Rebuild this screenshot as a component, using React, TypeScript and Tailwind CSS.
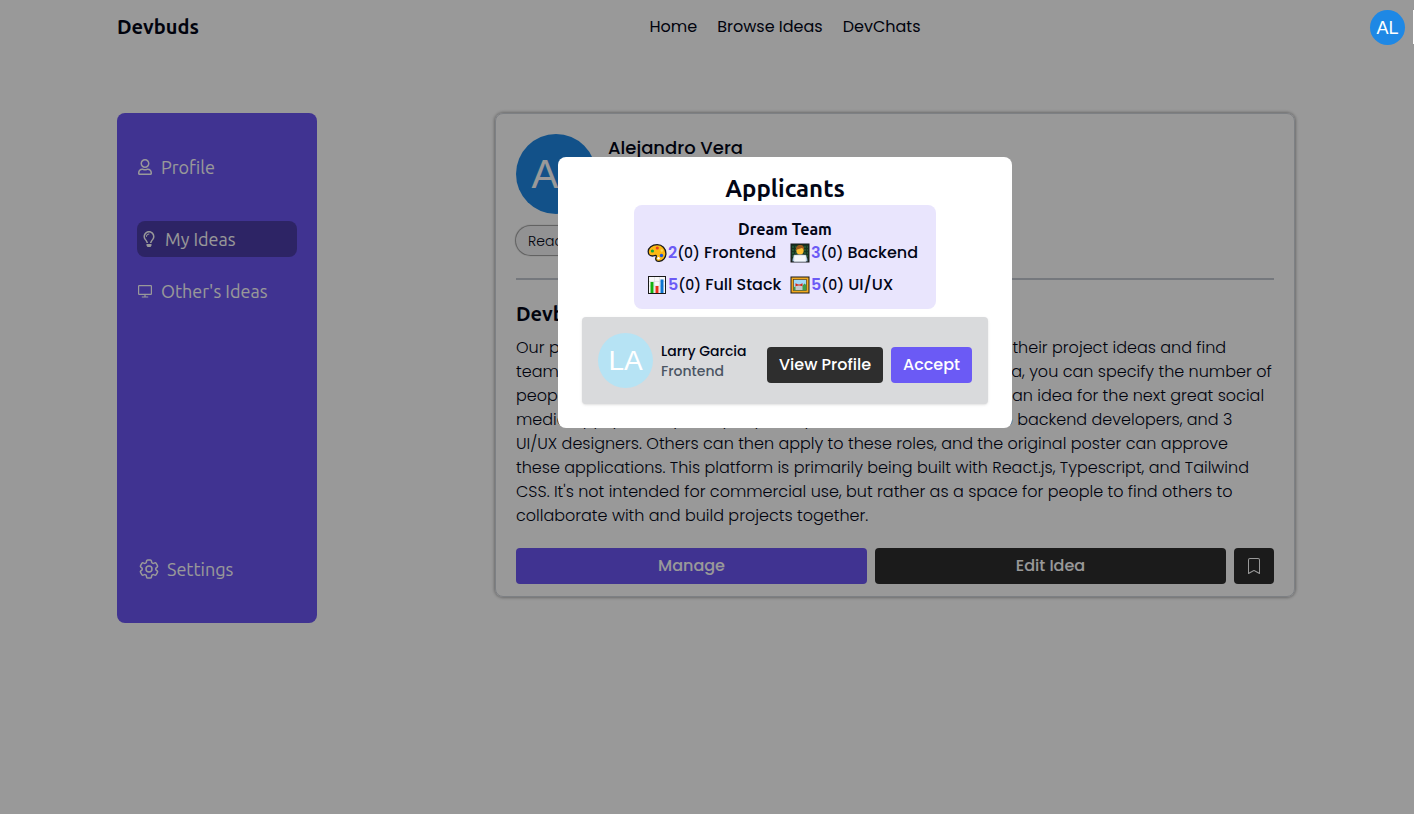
import { BsBookmark } from "react-icons/bs";
import { FaRegLightbulb, FaRegUser } from "react-icons/fa";
import { HiOutlineCog6Tooth } from "react-icons/hi2";
import type { ReactNode } from "react";

const HEAD = "font-['Ubuntu','Noto_Sans',sans-serif]";

function Monitor() {
  return (
    <svg viewBox="0 0 16 16" className="h-4 w-4 shrink-0" fill="none" stroke="currentColor" strokeWidth="1.2" aria-hidden="true">
      <rect x="1.600" y="2.600" width="12.800" height="8.800" rx=".6" />
      <path d="M8 11.400v2.400M4.800 14h6.400" />
    </svg>
  );
}

function Palette() {
  return (
    <svg viewBox="0 0 20 20" className="h-5 w-5 shrink-0" aria-hidden="true">
      <path d="M10.200 1.700C5 1.700 1.200 4.800 1.200 8.400c0 2.700 1.900 4.600 4.300 4.600 1.600 0 2.800-1 3.600-.4.900.8-.6 1.900-.4 3.400.2 1.700 1.700 2.500 3.400 2.400 4.100-.3 6.800-3.700 6.800-8 0-5-3.700-8.700-8.700-8.700z" fill="#fdb913" stroke="#1a1a1a" strokeWidth="1.300" />
      <circle cx="5.400" cy="8" r="1.600" fill="#16a637" />
      <circle cx="10.300" cy="5" r="1.600" fill="#e8431f" />
      <circle cx="14.500" cy="12.500" r="1.700" fill="#1a55e0" />
      <circle cx="14.800" cy="7.500" r="1.200" fill="#ffd95a" />
      <circle cx="11.500" cy="15.300" r="1.200" fill="#fff" />
    </svg>
  );
}

function Coder() {
  return (
    <svg viewBox="0 0 20 20" className="h-5 w-5 shrink-0" aria-hidden="true">
      <rect x="1" y="1" width="18" height="18" fill="#16351f" stroke="#1a1a1a" />
      <path d="M2 4h16M2 7h16M2 10h16M2 13h16" stroke="#3b8a56" strokeWidth=".7" strokeDasharray="2 1" />
      <path d="M2.200 18.500c0-5 3-7 7.800-7s7.800 2 7.800 7z" fill="#a9d3f5" stroke="#1a1a1a" strokeWidth=".5" />
      <ellipse cx="10" cy="7.600" rx="3.700" ry="4" fill="#fdc02f" />
      <path d="M6 7.600C5.500 4 7.200 2 10.200 2s4.500 2 3.800 5.600C13.500 6.200 13 5.500 11.800 5 10.500 6 7.200 5.600 6 7.600z" fill="#9c5a1d" />
      <rect x="3.800" y="12" width="12.400" height="6.800" rx=".8" fill="#f4f7fa" stroke="#a9b5c2" strokeWidth=".5" />
    </svg>
  );
}

function Chart() {
  return (
    <svg viewBox="0 0 20 20" className="h-5 w-5 shrink-0" aria-hidden="true">
      <rect x="1.500" y="1.500" width="17" height="17" fill="#f8f8f8" stroke="#1a1a1a" />
      <path d="M7.500 2v16M12.500 2v16M2 6.500h16M2 11h16" stroke="#d5d9dd" strokeWidth=".6" />
      <rect x="3.500" y="7" width="3" height="11" fill="#13b10e" />
      <rect x="8.500" y="11" width="3" height="7" fill="#e8311a" />
      <rect x="13.500" y="4.500" width="3" height="13.500" fill="#0f74d1" />
    </svg>
  );
}

function Picture() {
  return (
    <svg viewBox="0 0 20 20" className="h-5 w-5 shrink-0" aria-hidden="true">
      <rect x="1" y="2" width="18" height="16" fill="#f0a81e" stroke="#1a1a1a" />
      <rect x="3.500" y="4.500" width="13" height="11" fill="#9fd8f8" stroke="#5a4010" strokeWidth=".7" />
      <path d="M4 15.200V12l3-1 4 1 3.500-3.500 1.700 1.500v5.200z" fill="#3e9e4a" />
      <path d="M5.500 15V8l1.700 1.400h3.600L12.500 8v7z" fill="#c3c8ce" />
      <path d="M5.500 8.300l2.600 1.200h1.800l2.600-1.200v3l-2.800-.8H8.300l-2.800.8z" fill="#d62718" />
    </svg>
  );
}

const TEAM: { icon: ReactNode; need: number; role: string }[] = [
  { icon: <Palette />, need: 2, role: "Frontend" },
  { icon: <Coder />, need: 3, role: "Backend" },
  { icon: <Chart />, need: 5, role: "Full Stack" },
  { icon: <Picture />, need: 5, role: "UI/UX" },
];

const LINES = [
  "Our platform, Devbuds, is a place where people may also post their project ideas and find",
  "teammates to help build them together. When posting any idea, you can specify the number of",
  "people needed for every role. For example, if you already have an idea for the next great social",
  "media app, you may easily say that you want 2 frontend and 5 backend developers, and 3",
  "UI/UX designers. Others can then apply to these roles, and the original poster can approve",
  "these applications. This platform is primarily being built with React.js, Typescript, and Tailwind",
  "CSS. It's not intended for commercial use, but rather as a space for people to find others to",
  "collaborate with and build projects together.",
];

export default function App() {
  return (
    <div className="relative min-h-screen bg-white font-['Poppins','Inter',sans-serif] text-base text-[#020617]">
      <header className="grid h-[54px] grid-cols-[1fr_auto_1fr] items-center pr-[9px] pl-[117px]">
        <a href="#" className={`${HEAD} text-xl font-bold`}>Devbuds</a>
        <nav className="flex gap-5 pl-12">
          <a href="#">Home</a>
          <a href="#">Browse Ideas</a>
          <a href="#">DevChats</a>
        </nav>
        <button className="relative z-20 mt-px flex h-[35px] w-[35px] items-center justify-center justify-self-end rounded-full bg-[#1e88e5] font-['Liberation_Sans',sans-serif] text-lg text-white">AL</button>
        <span className="absolute top-[10px] right-0 z-20 h-[34px] w-px bg-white" />
      </header>

      <main className="flex items-start justify-between pt-[59px] pr-[119px] pl-[117px]">
        <aside className={`${HEAD} flex h-[510px] w-[200px] flex-col rounded-lg bg-[#6b55f2] p-5 text-lg text-white`}>
          <a href="#" className="mt-4 flex h-9 items-center gap-2"><FaRegUser className="h-4 w-4" />Profile</a>
          <a href="#" className="mt-9 flex h-9 items-center gap-2 rounded-lg bg-[#4c3da9] px-1"><FaRegLightbulb className="h-4 w-4" />My Ideas</a>
          <a href="#" className="mt-4 flex h-9 items-center gap-2"><Monitor />Other's Ideas</a>
          <a href="#" className="mt-auto mb-4 flex h-9 items-center gap-1.5"><HiOutlineCog6Tooth className="h-6 w-6" />Settings</a>
        </aside>

        <article className="w-[800px] rounded-lg border border-gray-300 px-5 pt-5 pb-3 shadow-[0_0_3px_1px_rgba(0,0,0,0.3)]">
          <div className="flex gap-3">
            <div className="flex h-20 w-20 items-center justify-center rounded-full bg-[#1e88e5] font-['Liberation_Sans',sans-serif] text-[40px] text-white">AL</div>
            <h2 className="text-lg font-medium">Alejandro Vera</h2>
          </div>
          <div className="mt-3 flex">
            <span className="flex h-[29px] items-center rounded-full bg-gray-100 px-3 text-sm font-light shadow-[0_0_1px_1px_rgba(0,0,0,0.4)]">React</span>
          </div>
          <hr className="mt-[23px] border-t-2 border-[#c3c9d0]" />
          <h3 className={`${HEAD} mt-5 text-xl font-bold`}>Devbuds</h3>
          <p className="mt-2 font-light">
            {LINES.map((line) => <span key={line} className="block whitespace-nowrap">{line}</span>)}
          </p>
          <div className="mt-5 flex gap-2 font-medium text-white">
            <button className="h-9 flex-1 rounded bg-[#6b55f2]">Manage</button>
            <button className="h-9 flex-1 rounded bg-[#2e2e2e]">Edit Idea</button>
            <button aria-label="Save idea" className="flex h-9 w-10 items-center justify-center rounded bg-[#2e2e2e]"><BsBookmark className="h-4 w-4" /></button>
          </div>
        </article>
      </main>

      <div className="absolute inset-0 z-10 bg-black/40" />
      <div className="absolute inset-x-0 top-[157px] z-20 flex justify-center pl-[156px]">
        <section role="dialog" aria-labelledby="applicants" className="flex w-[454px] flex-col items-center rounded-lg bg-white px-6 pt-4 pb-6">
          <h2 id="applicants" className={`${HEAD} text-2xl font-bold`}>Applicants</h2>
          <div className="w-[302px] rounded-lg bg-[#e9e5fd] p-3">
            <h3 className={`${HEAD} text-center text-base font-bold`}>Dream Team</h3>
            <ul className="grid grid-cols-[143px_1fr] gap-y-2 pl-px font-medium whitespace-nowrap">
              {TEAM.map((t) => (
                <li key={t.role} className="flex h-6 items-center">
                  {t.icon}
                  <span className="ml-px font-semibold text-[#6b5af5]">{t.need}</span>
                  <span><span className="text-sm">(0)</span> {t.role}</span>
                </li>
              ))}
            </ul>
          </div>
          <div className="mt-2 flex w-full items-center rounded bg-[#d9dadc] p-4 shadow">
            <div className="flex h-[55px] w-[55px] items-center justify-center rounded-full bg-[#b6e3f4] font-['Liberation_Sans',sans-serif] text-[28px] text-white">LA</div>
            <div className="ml-2 text-sm font-medium">
              <p>Larry Garcia</p>
              <p className="text-[#4b5563]">Frontend</p>
            </div>
            <div className="mt-2 ml-auto flex gap-2 font-medium text-white">
              <button className="h-9 w-[116px] rounded bg-[#2e2e2e]">View Profile</button>
              <button className="h-9 w-[81px] rounded bg-[#6b5af5]">Accept</button>
            </div>
          </div>
        </section>
      </div>
    </div>
  );
}
